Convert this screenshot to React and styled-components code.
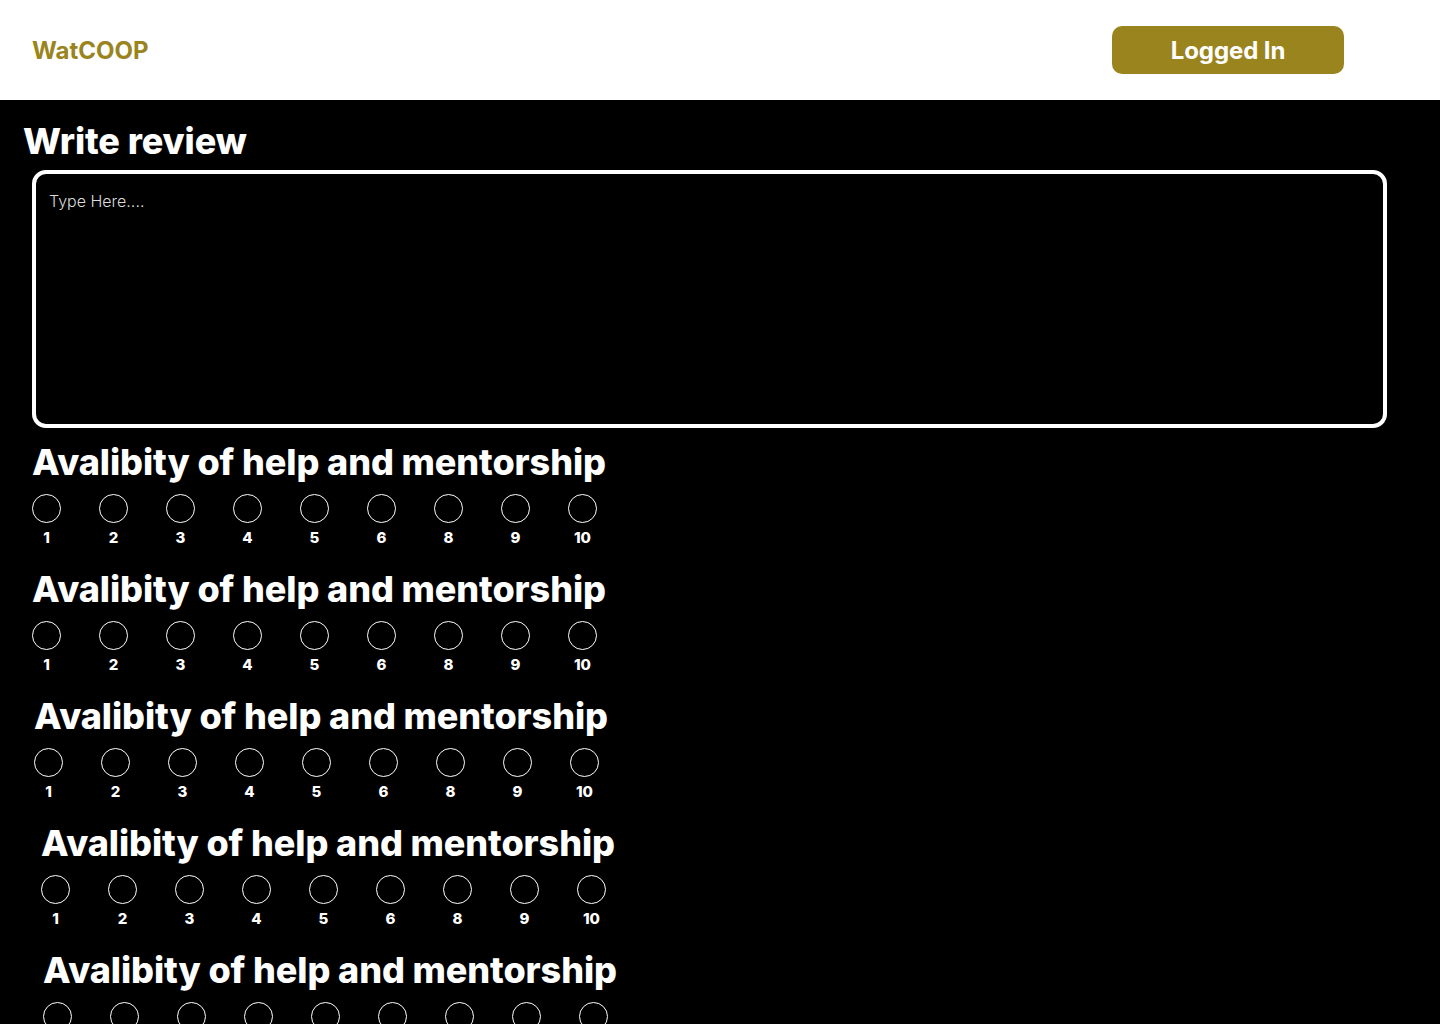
import React from "react";
import styled, { createGlobalStyle } from "styled-components";

const Global = createGlobalStyle`
  html, body { margin: 0; padding: 0; background: #000; }
  body { font-family: Inter, "Noto Sans", sans-serif; }
  * { box-sizing: border-box; }
`;

const Page = styled.div`
  background: #000;
  overflow: hidden;
  height: 1024px;
`;

const Header = styled.header`
  height: 100px;
  background: #fff;
  display: flex;
  align-items: center;
  justify-content: space-between;
  padding: 0 96px 0 32px;
`;

const Logo = styled.div`
  color: #9a841d;
  font-weight: 700;
  font-size: 24px;
  letter-spacing: 0;
`;

const LoginButton = styled.button`
  width: 232px;
  height: 48px;
  border: none;
  border-radius: 10px;
  background: #9a841d;
  color: #fff;
  font-family: Inter, sans-serif;
  font-weight: 700;
  font-size: 24px;
  letter-spacing: -0.1px;
`;

const Main = styled.main`
  padding: 0 53px 0 32px;
  display: flex;
  flex-direction: column;
`;

const Title = styled.h1`
  margin: 19px 0 0 -9px;
  color: #fff;
  font-size: 36px;
  line-height: 44px;
  font-weight: 800;
  letter-spacing: -0.1px;
`;

const ReviewBox = styled.textarea`
  margin-top: 7px;
  height: 258px;
  width: 100%;
  background: #000;
  border: 4px solid #fff;
  border-radius: 14px;
  padding: 17px 13px;
  color: #fff;
  font-family: Inter, sans-serif;
  font-size: 16px;
  font-weight: 300;
  resize: none;
  outline: none;
  &::placeholder { color: #dcdcdc; }
`;

const Section = styled.section`
  margin-top: ${(p) => (p.$first ? "12px" : "21px")};
  margin-left: ${(p) => p.$shift}px;
  display: flex;
  flex-direction: column;
`;

const SectionTitle = styled.h2`
  margin: 0;
  color: #fff;
  font-size: 36px;
  line-height: 44px;
  font-weight: 800;
  letter-spacing: -0.1px;
  white-space: nowrap;
`;

const Scale = styled.div`
  margin-top: 10px;
  display: flex;
  gap: 38px;
`;

const Option = styled.label`
  width: 29px;
  display: flex;
  flex-direction: column;
  align-items: center;
  gap: 6px;
`;

const Circle = styled.span`
  width: 29px;
  height: 29px;
  border-radius: 50%;
  border: 1px solid #fff;
`;

const Num = styled.span`
  color: #fff;
  font-size: 15px;
  line-height: 17px;
  font-weight: 800;
`;

const values = [1, 2, 3, 4, 5, 6, 8, 9, 10];
const shifts = [0, 0, 2, 9, 11];

export default function App() {
  return (
    <Page>
      <Global />
      <Header>
        <Logo>WatCOOP</Logo>
        <LoginButton>Logged In</LoginButton>
      </Header>
      <Main>
        <Title>Write review</Title>
        <ReviewBox placeholder="Type Here...." />
        {shifts.map((s, i) => (
          <Section key={i} $first={i === 0} $shift={s}>
            <SectionTitle>Avalibity of help and mentorship</SectionTitle>
            <Scale>
              {values.map((v) => (
                <Option key={v}>
                  <Circle />
                  <Num>{v}</Num>
                </Option>
              ))}
            </Scale>
          </Section>
        ))}
      </Main>
    </Page>
  );
}
